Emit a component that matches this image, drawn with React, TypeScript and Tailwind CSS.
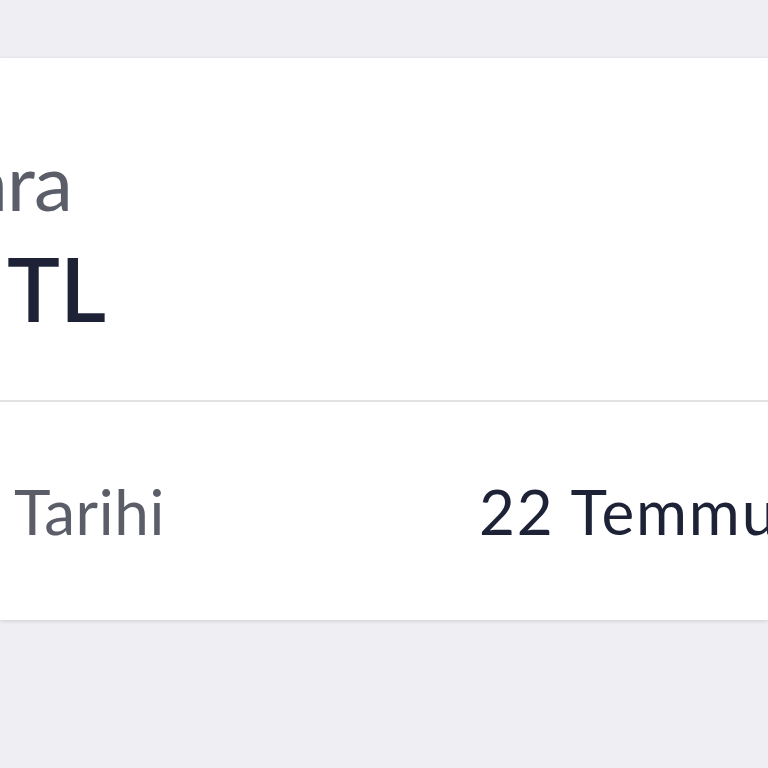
export default function App() {
  return (
    <div className="h-screen w-screen overflow-hidden bg-[#efeff3] pt-[58px] font-['Lato',sans-serif]">
      <div className="bg-white shadow-[0_1px_4px_rgba(0,0,0,0.14)]">
        <div className="h-[342px] pt-[84px]">
          <div className="flex w-[72px] justify-end whitespace-nowrap">
            <span className="text-[78px] leading-none tracking-[-0.01em] text-[#5b5e68]">Tutara</span>
          </div>
          <div className="mt-[23px] flex w-[106px] justify-end whitespace-nowrap">
            <span className="text-[89px] font-semibold leading-none text-[#1d2237]">250 TL</span>
          </div>
        </div>
        <div className="h-[2px] bg-[#e2e2e5]" />
        <div className="flex h-[218px] items-center whitespace-nowrap">
          <div className="flex w-[165px] shrink-0 justify-end">
            <span className="text-[62px] leading-none tracking-[0.01em] text-[#5b5e68]">İşlem Tarihi</span>
          </div>
          <span className="ml-[314px] text-[62px] leading-none tracking-[0.03em] text-[#1d2237]">22 Temmuz 2021</span>
        </div>
      </div>
    </div>
  );
}
